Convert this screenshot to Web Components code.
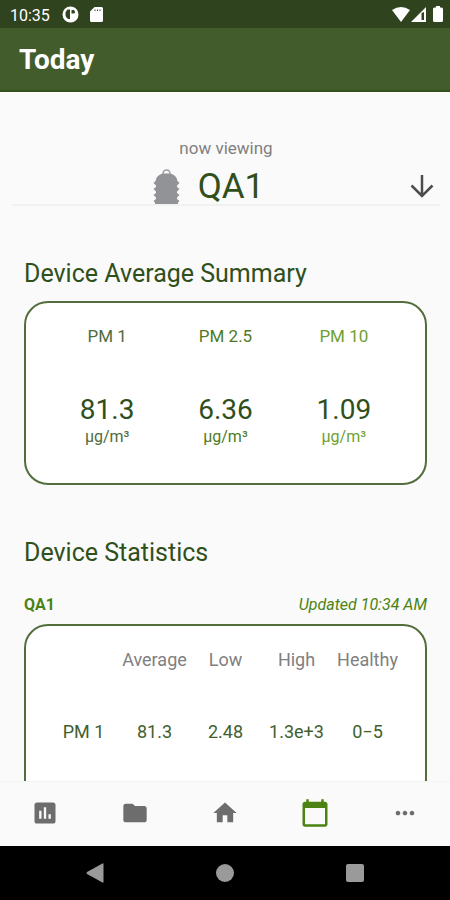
<!DOCTYPE html>
<html lang="en">
<head>
<meta charset="utf-8">
<meta name="viewport" content="width=device-width, initial-scale=1">
<title>Today</title>
<style>
  html, body { margin: 0; height: 100%; }
  body {
    font-family: Roboto, "Liberation Sans", sans-serif;
    background: #fafafa;
    --dark: #2f4f1b;
    --mid: #4c8213;
    --line: #536e3c;
    --grey: #808080;
  }
</style>
</head>
<body>
<air-app>
  <status-bar slot="top" time="10:35"></status-bar>
  <app-bar slot="top">Today</app-bar>

  <device-picker name="QA1">now viewing</device-picker>

  <page-section heading="Device Average Summary">
    <rounded-card>
      <summary-grid>
        <summary-value label="PM 1" value="81.3" unit="µg/m³" style="--tone:#4f6b40"></summary-value>
        <summary-value label="PM 2.5" value="6.36" unit="µg/m³" style="--tone:#4f7a25"></summary-value>
        <summary-value label="PM 10" value="1.09" unit="µg/m³" style="--tone:#6f9f33"></summary-value>
      </summary-grid>
    </rounded-card>
  </page-section>

  <page-section heading="Device Statistics">
    <stats-caption device="QA1">Updated 10:34 AM</stats-caption>
    <rounded-card>
      <stats-table></stats-table>
    </rounded-card>
  </page-section>

  <tab-bar slot="bottom"></tab-bar>
  <system-nav slot="bottom"></system-nav>
</air-app>

<script>
  const define = (name, render) => customElements.define(name, class extends HTMLElement {
    connectedCallback() {
      if (this.shadowRoot) return;
      this.attachShadow({ mode: "open" }).innerHTML = render(this);
    }
  });

  define("air-app", () => `
    <style>
      :host { display: flex; flex-direction: column; height: 100vh; }
      main { flex: 1; min-height: 0; overflow-y: auto; scrollbar-width: none; }
    </style>
    <slot name="top"></slot>
    <main><slot></slot></main>
    <slot name="bottom"></slot>`);

  define("status-bar", el => `
    <style>
      :host { display: flex; align-items: center; height: 28px; padding: 0 7px 0 10px;
        background: #30431f; color: #fff; font-size: 16px; }
      .time { margin: 2px 12px 0 0; }
      .gap { flex: 1; }
      svg { display: block; fill: #fff; }
    </style>
    <span class="time">${el.getAttribute("time")}</span>
    <svg width="17" height="17" viewBox="0 0 17 17" aria-hidden="true"><path fill-rule="evenodd" d="M8.500 .5a8 8 0 1 0 0 16a8 8 0 1 0 0-16zM5.500 3.500H8v9.500H6.500Q3.500 11.500 3.500 8.500Q3.500 5 5.500 3.500zM9.500 4h2q1.500.5 1.500 2t-1.500 1.500h-2z"/></svg>
    <svg style="margin-left:11px" width="13" height="15" viewBox="0 0 13 15" aria-hidden="true"><path fill-rule="evenodd" d="M4.500 0H11.500Q13 0 13 1.500V13.500Q13 15 11.500 15H1.500Q0 15 0 13.500V4.500zM4.500 2.500v1.500h1v-1.500zM7 2.500v1.500h1v-1.500zM9.500 2.500v1.500h1v-1.500z"/></svg>
    <span class="gap"></span>
    <svg width="18" height="15" viewBox="0 0 18 15" aria-hidden="true"><path d="M0 3Q9-3 18 3L9 15z"/></svg>
    <svg style="margin-left:1px" width="15" height="15" viewBox="0 0 15 15" aria-hidden="true"><path fill-rule="evenodd" d="M15 0V15H0zM10.500 6v7h2.500V5z"/></svg>
    <svg style="margin-left:7px" width="10" height="16" viewBox="0 0 10 16" aria-hidden="true"><path d="M3 0h4v1.500h1.500Q10 1.500 10 3v11.500Q10 16 8.500 16h-7Q0 16 0 14.500V3Q0 1.500 1.500 1.500H3z"/></svg>`);

  define("app-bar", () => `
    <style>
      :host { display: flex; align-items: center; height: 60px; padding: 2px 19px 0;
        background: #435c2c; color: #fff; border-bottom: 2px solid #36501b; }
      h1 { margin: 0; font-size: 28px; line-height: 36px; font-weight: 700; }
    </style>
    <h1><slot></slot></h1>`);

  define("device-picker", el => `
    <style>
      :host { display: block; padding: 44px 10px 0 12px; }
      button { display: grid; grid-template-columns: 1fr auto 1fr; align-items: center; width: 100%;
        padding: 0; border: 0; border-bottom: 2px solid #f1f1f1; background: none; font: inherit; cursor: pointer; }
      .label { grid-column: 1 / -1; margin-bottom: 9px; font-size: 17px; line-height: 24px; color: var(--grey); }
      .name { padding-left: 10px; font-size: 35px; line-height: 34px; color: var(--dark); }
      .device { justify-self: end; margin-right: 8px; }
      .arrow { justify-self: end; margin-right: 6px; }
      svg { display: block; }
    </style>
    <button type="button">
      <span class="label"><slot></slot></span>
      <svg class="device" width="27" height="35" viewBox="0 0 27 35" aria-hidden="true">
        <path d="M10 5Q10 1 13.500 1Q17 1 17 5" fill="none" stroke="#a0a1a4" stroke-width="1.500"/>
        <path fill="#929397" d="M9.500 4.500h8Q24 6.500 24.500 12L26.500 14 24 16.500V18L26.500 20 24 22.500V24L26.500 26 24 28.500V30L26.500 32 25 33.500V35H2V33.500L.5 32 3 30V28.500L.5 26 3 24V22.500L.5 20 3 18V16.500L.5 14 2.500 12Q3 6.500 9.500 4.500z"/>
      </svg>
      <span class="name">${el.getAttribute("name")}</span>
      <svg class="arrow" width="24" height="24" viewBox="0 0 24 24" fill="none" stroke="#4c4c4c" stroke-width="2.500" aria-hidden="true"><path d="M12 0v21M1.500 10.500L12 21l10.500-10.500"/></svg>
    </button>`);

  define("page-section", el => `
    <style>
      :host { display: block; padding: 50px 23px 0 24px; }
      h2 { margin: 0 0 9px; font-size: 25px; line-height: 36px; font-weight: 400; color: var(--dark); }
    </style>
    <h2>${el.getAttribute("heading")}</h2>
    <slot></slot>`);

  define("rounded-card", () => `
    <style>
      :host { display: block; border: 2px solid var(--line); border-radius: 24px; background: #fff; padding: 22px; }
    </style>
    <slot></slot>`);

  define("summary-grid", () => `
    <style>
      :host { display: grid; grid-template-columns: repeat(3, 1fr); padding-bottom: 14px; }
    </style>
    <slot></slot>`);

  define("summary-value", el => `
    <style>
      :host { display: flex; flex-direction: column; align-items: center; color: var(--tone); }
      .label { font-size: 17px; line-height: 22px; margin-bottom: 46px; }
      .value { font-size: 28px; line-height: 34px; color: var(--dark); }
      .unit { font-size: 16px; line-height: 20px; }
    </style>
    <span class="label">${el.getAttribute("label")}</span>
    <span class="value">${el.getAttribute("value")}</span>
    <span class="unit">${el.getAttribute("unit")}</span>`);

  define("stats-caption", el => `
    <style>
      :host { display: flex; justify-content: space-between; font-size: 16px; line-height: 24px;
        color: var(--mid); padding: 13px 0 7px; }
    </style>
    <strong>${el.getAttribute("device")}</strong>
    <em><slot></slot></em>`);

  define("stats-table", () => `
    <style>
      :host { display: block; }
      table { width: 100%; table-layout: fixed; border-collapse: collapse; font-size: 18px; line-height: 24px; }
      th, td { padding: 0 0 48px; text-align: center; font-weight: 400; white-space: nowrap; }
      thead th { color: var(--grey); }
      tbody { color: #42602f; }
    </style>
    <table>
      <thead><tr><td></td><th scope="col">Average</th><th scope="col">Low</th><th scope="col">High</th><th scope="col">Healthy</th></tr></thead>
      <tbody><tr><th scope="row">PM 1</th><td>81.3</td><td>2.48</td><td>1.3e+3</td><td>0−5</td></tr></tbody>
    </table>`);

  define("tab-bar", () => `
    <style>
      :host { display: block; background: #fafafa; border-top: 1px solid #f4f4f4; }
      nav { display: grid; grid-template-columns: repeat(5, 1fr); height: 64px; }
      button { display: grid; place-items: center; padding: 0 0 2px; border: 0; background: none; color: #6d6d6d; cursor: pointer; }
      button[aria-current] { color: var(--mid); }
      svg { display: block; fill: currentColor; }
    </style>
    <nav aria-label="Sections">
      <button type="button" aria-label="Statistics"><svg width="28" height="28" viewBox="0 0 24 24"><path d="M19 3H5c-1.100 0-2 .9-2 2v14c0 1.100.9 2 2 2h14c1.100 0 2-.9 2-2V5c0-1.100-.9-2-2-2zM9 17H7v-7h2v7zm4 0h-2V7h2v10zm4 0h-2v-4h2v4z"/></svg></button>
      <button type="button" aria-label="Files"><svg width="28" height="28" viewBox="0 0 24 24"><path d="M10 4H4c-1.100 0-2 .9-2 2v12c0 1.100.9 2 2 2h16c1.100 0 2-.9 2-2V8c0-1.100-.9-2-2-2h-8l-2-2z"/></svg></button>
      <button type="button" aria-label="Home"><svg width="28" height="28" viewBox="0 0 24 24"><path d="M10 20v-6h4v6h5v-8h3L12 3 2 12h3v8z"/></svg></button>
      <button type="button" aria-label="Today" aria-current="page"><svg width="30" height="30" viewBox="0 0 24 24"><path d="M20 3h-1V1h-2v2H7V1H5v2H4c-1.100 0-2 .9-2 2v16c0 1.100.9 2 2 2h16c1.100 0 2-.9 2-2V5c0-1.100-.9-2-2-2zm0 18H4V8h16v13z"/></svg></button>
      <button type="button" aria-label="More"><svg width="28" height="28" viewBox="0 0 24 24"><path d="M6 10c-1.100 0-2 .9-2 2s.9 2 2 2 2-.9 2-2-.9-2-2-2zm12 0c-1.100 0-2 .9-2 2s.9 2 2 2 2-.9 2-2-.9-2-2-2zm-6 0c-1.100 0-2 .9-2 2s.9 2 2 2 2-.9 2-2-.9-2-2-2z"/></svg></button>
    </nav>`);

  define("system-nav", () => `
    <style>
      :host { display: block; background: #000; }
      nav { display: grid; grid-template-columns: repeat(3, 130px); justify-content: center; height: 54px; }
      button { display: grid; place-items: center; padding: 0; border: 0; background: none; cursor: pointer; }
      svg { display: block; fill: #9a9a9a; }
    </style>
    <nav aria-label="System">
      <button type="button" aria-label="Back"><svg width="20" height="20" viewBox="0 0 20 20"><path d="M18.500 1v18q0 1-1 .5L2 11q-1-1 0-2L17.500.5q1-.5 1 .5z"/></svg></button>
      <button type="button" aria-label="Home screen"><svg width="20" height="20" viewBox="0 0 20 20"><circle cx="10" cy="10" r="9"/></svg></button>
      <button type="button" aria-label="Recent apps"><svg width="20" height="20" viewBox="0 0 20 20"><rect x="1" y="1" width="18" height="18" rx="2"/></svg></button>
    </nav>`);
</script>
</body>
</html>
